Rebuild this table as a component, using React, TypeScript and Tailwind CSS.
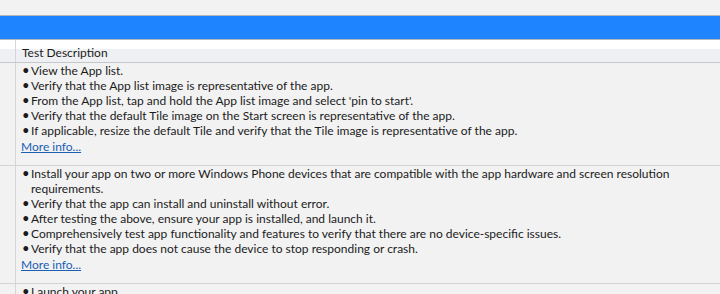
const rows = [
  {
    items: [
      "View the App list.",
      "Verify that the App list image is representative of the app.",
      "From the App list, tap and hold the App list image and select 'pin to start'.",
      "Verify that the default Tile image on the Start screen is representative of the app.",
      "If applicable, resize the default Tile and verify that the Tile image is representative of the app.",
    ],
    more: true,
  },
  {
    items: [
      "Install your app on two or more Windows Phone devices that are compatible with the app hardware and screen resolution requirements.",
      "Verify that the app can install and uninstall without error.",
      "After testing the above, ensure your app is installed, and launch it.",
      "Comprehensively test app functionality and features to verify that there are no device-specific issues.",
      "Verify that the app does not cause the device to stop responding or crash.",
    ],
    more: true,
  },
  {
    items: ["Launch your app."],
    more: false,
  },
];

export default function App() {
  return (
    <div
      className="h-[294px] w-[720px] overflow-hidden bg-[#f2f2f2] text-[12px] leading-[15px] text-[#1b1b1b]"
      style={{ fontFamily: "Lato, 'Liberation Sans', sans-serif" }}
    >
      <div className="h-[15px]" />
      <div className="h-[25px] border-y border-[#b4b6ba] bg-[#1f84ff]" />
      <div className="flex h-[23px] border-b border-[#c6c7cb] bg-[linear-gradient(to_bottom,#ffffff_40%,#eff0f3_40%)]">
        <div className="w-[16px] shrink-0 border-r border-[#d6d6d6]" />
        <div className="flex items-center pl-[6px] pt-[3px]">Test Description</div>
      </div>
      {rows.map((row, i) => (
        <div key={i} className="flex border-b border-[#d4d4d4]">
          <div className="w-[16px] shrink-0 border-r border-[#d6d6d6]" />
          <div className="pb-[11px] pl-[5px] pr-[30px]">
            <ul>
              {row.items.map((t) => (
                <li key={t} className="flex">
                  <span className="w-[10px] shrink-0 pl-[1px] text-[13px]">•</span>
                  <span>{t}</span>
                </li>
              ))}
            </ul>
            {row.more && (
              <a href="#" className="mt-[1px] inline-block text-[#1a5fb4] underline">
                More info...
              </a>
            )}
          </div>
        </div>
      ))}
    </div>
  );
}
